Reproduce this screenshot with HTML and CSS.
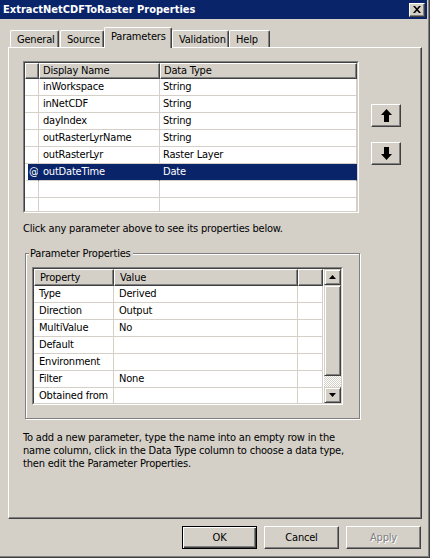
FILE: index.html
```html
<!DOCTYPE html>
<html>
<head>
<meta charset="utf-8">
<title>ExtractNetCDFToRaster Properties</title>
<link rel="stylesheet" href="styles.css">
</head>
<body>
<div class="window">
	<div class="titlebar">
		<span class="title">ExtractNetCDFToRaster Properties</span>
		<div class="close-btn">
			<svg width="8" height="7" viewBox="0 0 8 7"><path d="M0 0h2l2 2.3 2-2.3h2l-3 3.5 3 3.5h-2l-2-2.3-2 2.3h-2l3-3.5z" fill="#000"/></svg>
		</div>
	</div>

	<div class="client">
		<div class="tabs">
			<div class="tab tab-general">General</div>
			<div class="tab tab-source">Source</div>
			<div class="tab tab-params active">Parameters</div>
			<div class="tab tab-valid">Validation</div>
			<div class="tab tab-help">Help</div>
		</div>

		<div class="panel">
			<div class="param-area">
				<div class="grid param-grid">
					<div class="grid-inner">
						<div class="row head">
							<div class="cell hdr"></div>
							<div class="cell hdr">Display Name</div>
							<div class="cell hdr">Data Type</div>
						</div>
						<div class="row">
							<div class="cell rh"></div>
							<div class="cell">inWorkspace</div>
							<div class="cell">String</div>
						</div>
						<div class="row">
							<div class="cell rh"></div>
							<div class="cell">inNetCDF</div>
							<div class="cell">String</div>
						</div>
						<div class="row">
							<div class="cell rh"></div>
							<div class="cell">dayIndex</div>
							<div class="cell">String</div>
						</div>
						<div class="row">
							<div class="cell rh"></div>
							<div class="cell">outRasterLyrName</div>
							<div class="cell">String</div>
						</div>
						<div class="row">
							<div class="cell rh"></div>
							<div class="cell">outRasterLyr</div>
							<div class="cell">Raster Layer</div>
						</div>
						<div class="row selected">
							<div class="cell rh"><span class="rh-mark">@</span></div>
							<div class="cell">outDateTime</div>
							<div class="cell">Date</div>
						</div>
						<div class="row">
							<div class="cell rh"></div>
							<div class="cell"></div>
							<div class="cell"></div>
						</div>
						<div class="row">
							<div class="cell rh"></div>
							<div class="cell"></div>
							<div class="cell"></div>
						</div>
					</div>
				</div>

				<div class="move-btns">
					<div class="move-btn">
						<svg width="11" height="13" viewBox="0 0 11 13"><path d="M5.5 0L11 6H8V13H3V6H0Z" fill="#000"/></svg>
					</div>
					<div class="move-btn">
						<svg width="11" height="13" viewBox="0 0 11 13"><path d="M5.5 13L11 7H8V0H3V7H0Z" fill="#000"/></svg>
					</div>
				</div>
			</div>

			<p class="hint">Click any parameter above to see its properties below.</p>

			<div class="group">
				<div class="group-label">Parameter Properties</div>
				<div class="grid prop-grid">
					<div class="grid-inner prop-inner">
						<div class="prop-table">
							<div class="prow head">
								<div class="cell hdr">Property</div>
								<div class="cell hdr">Value</div>
								<div class="cell hdr"></div>
								<div class="cell gap"></div>
							</div>
							<div class="prow">
								<div class="cell">Type</div>
								<div class="cell">Derived</div>
								<div class="cell"></div>
								<div class="cell gap"></div>
							</div>
							<div class="prow">
								<div class="cell">Direction</div>
								<div class="cell">Output</div>
								<div class="cell"></div>
								<div class="cell gap"></div>
							</div>
							<div class="prow">
								<div class="cell">MultiValue</div>
								<div class="cell">No</div>
								<div class="cell"></div>
								<div class="cell gap"></div>
							</div>
							<div class="prow">
								<div class="cell">Default</div>
								<div class="cell"></div>
								<div class="cell"></div>
								<div class="cell gap"></div>
							</div>
							<div class="prow">
								<div class="cell">Environment</div>
								<div class="cell"></div>
								<div class="cell"></div>
								<div class="cell gap"></div>
							</div>
							<div class="prow">
								<div class="cell">Filter</div>
								<div class="cell">None</div>
								<div class="cell"></div>
								<div class="cell gap"></div>
							</div>
							<div class="prow">
								<div class="cell">Obtained from</div>
								<div class="cell"></div>
								<div class="cell"></div>
								<div class="cell gap"></div>
							</div>
						</div>
						<div class="scrollbar">
							<div class="sb-btn">
								<svg width="7" height="4" viewBox="0 0 7 4"><path d="M3.5 0L7 4H0Z" fill="#000"/></svg>
							</div>
							<div class="sb-thumb"></div>
							<div class="sb-track"></div>
							<div class="sb-btn">
								<svg width="7" height="4" viewBox="0 0 7 4"><path d="M0 0H7L3.5 4Z" fill="#000"/></svg>
							</div>
						</div>
					</div>
				</div>
			</div>

			<p class="help">To add a new parameter, type the name into an empty row in the<br>name column, click in the Data Type column to choose a data type,<br>then edit the Parameter Properties.</p>
		</div>

		<div class="buttons">
			<button class="btn default">OK</button>
			<button class="btn">Cancel</button>
			<button class="btn disabled">Apply</button>
		</div>
	</div>
</div>
</body>
</html>
```

FILE: styles.css
```css
* {
	box-sizing: border-box;
	margin: 0;
	padding: 0;
}

body {
	font-family: "DejaVu Sans Condensed", "Liberation Sans", sans-serif;
	font-size: 11px;
	line-height: 13px;
	letter-spacing: -0.2px;
	color: #000;
	background: #d4d0c8;
}

.window {
	width: 430px;
	height: 558px;
	background: #d4d0c8;
	border-right: 1px solid #404040;
	border-bottom: 1px solid #404040;
	box-shadow: inset -1px -1px #808080;
	padding: 0 2px 2px 0;
}

/* title bar */
.titlebar {
	height: 19px;
	background: #0a246a;
	display: flex;
	align-items: center;
	justify-content: space-between;
	padding: 0 2px 0 3px;
}

.title {
	color: #fff;
	font-weight: bold;
	letter-spacing: 0;
}

.close-btn {
	width: 16px;
	height: 14px;
	background: #d4d0c8;
	border: 1px solid;
	border-color: #fff #404040 #404040 #fff;
	box-shadow: inset -1px -1px #808080;
	display: flex;
	align-items: center;
	justify-content: center;
}

.client {
	padding: 0 5px 0 8px;
}

/* tabs */
.tabs {
	display: flex;
	align-items: flex-end;
	height: 28px;
	padding-left: 2px;
}

.tab {
	height: 17px;
	border-left: 1px solid #fff;
	border-top: 1px solid #fff;
	border-right: 1px solid #404040;
	box-shadow: inset -1px 0 #808080;
	border-radius: 2px 2px 0 0;
	padding: 2px 0 0 6px;
	white-space: nowrap;
}

.tab-general { width: 49px; margin-right: 1px; }
.tab-source { width: 44px; }
.tab-params { width: 68px; }
.tab-valid { width: 57px; }
.tab-help { width: 41px; }

.tab.active {
	height: 21px;
	margin-bottom: -1px;
	padding-top: 2px;
	background: #d4d0c8;
	position: relative;
	z-index: 1;
}

/* panel */
.panel {
	height: 472px;
	border-left: 1px solid #fff;
	border-top: 1px solid #fff;
	border-right: 1px solid #404040;
	border-bottom: 1px solid #404040;
	box-shadow: inset -1px -1px #808080;
	padding: 13px 0 0 14px;
}

.param-area {
	display: flex;
}

.grid {
	background: #fff;
	border: 1px solid;
	border-color: #808080 #fff #fff #808080;
}

.grid-inner {
	height: 100%;
	border: 1px solid;
	border-color: #404040 #d4d0c8 #d4d0c8 #404040;
	overflow: hidden;
}

.param-grid {
	width: 336px;
	height: 152px;
}

.row {
	display: grid;
	grid-template-columns: 14px 121px 1fr;
	height: 17px;
}

.cell {
	border-right: 1px solid #d4d0c8;
	border-bottom: 1px solid #d4d0c8;
	padding-left: 4px;
	line-height: 16px;
	white-space: nowrap;
	overflow: hidden;
}

.row .cell:nth-child(3) {
	padding-left: 3px;
}

.cell.hdr {
	background: #d4d0c8;
	border-top: 1px solid #fff;
	border-left: 1px solid #fff;
	border-right: 1px solid #404040;
	border-bottom: 1px solid #404040;
	box-shadow: inset -1px -1px #808080;
	line-height: 14px;
	padding-left: 3px;
}

.row.head {
	height: 16px;
}

.cell.rh {
	padding: 0;
}

.row.selected .cell {
	background: #0a246a;
	color: #fff;
	border-right-color: #0a246a;
}

.row.selected .cell.rh {
	border-left: 3px solid #fff;
}

.rh-mark {
	display: block;
	padding-left: 1px;
	color: #fff;
}

.move-btns {
	display: flex;
	flex-direction: column;
	gap: 15px;
	margin: 43px 0 0 12px;
}

.move-btn {
	width: 30px;
	height: 23px;
	border: 1px solid;
	border-color: #fff #404040 #404040 #fff;
	box-shadow: inset -1px -1px #808080;
	display: flex;
	align-items: center;
	justify-content: center;
}

.hint {
	margin-top: 9px;
}

/* group box */
.group {
	width: 335px;
	margin: 18px 0 0 2px;
	border: 1px solid #808080;
	box-shadow: inset 1px 1px #fff, 1px 1px #fff;
	padding: 0 0 13px 6px;
}

.group-label {
	width: max-content;
	margin: -7px 0 0 -3px;
	padding: 0 2px 0 1px;
	background: #d4d0c8;
}

.prop-grid {
	width: 311px;
	height: 138px;
	margin-top: 7px;
}

.prop-inner {
	display: flex;
}

.prop-table {
	width: 290px;
}

.prow {
	display: grid;
	grid-template-columns: 80px 184px 25px 1fr;
	height: 17px;
}

.prow .cell:nth-child(2) {
	padding-left: 5px;
}

.prow .cell:first-child {
	padding-left: 5px;
}

.prow.head .cell.hdr {
	line-height: 15px;
}

.prow .cell.gap {
	border: 0;
	background: #fff;
	box-shadow: none;
}

.scrollbar {
	width: 17px;
	display: flex;
	flex-direction: column;
}

.sb-btn,
.sb-thumb {
	background: #d4d0c8;
	border: 1px solid;
	border-color: #d4d0c8 #404040 #404040 #d4d0c8;
	box-shadow: inset 1px 1px #fff, inset -1px -1px #808080;
}

.sb-btn {
	height: 16px;
	flex: none;
	display: flex;
	align-items: center;
	justify-content: center;
}

.sb-thumb {
	height: 91px;
	flex: none;
}

.sb-track {
	flex: 1;
	background: repeating-conic-gradient(#fff 0 25%, #d4d0c8 0 50%) 0 0 / 2px 2px;
}

.help {
	margin-top: 12px;
}

/* dialog buttons */
.buttons {
	display: flex;
	justify-content: flex-end;
	gap: 7px;
	margin: 7px 1px 0 0;
}

.btn {
	width: 75px;
	height: 23px;
	font-family: inherit;
	font-size: 11px;
	letter-spacing: inherit;
	background: #d4d0c8;
	border: 1px solid;
	border-color: #fff #404040 #404040 #fff;
	box-shadow: inset -1px -1px #808080;
}

.btn.default {
	border-color: #000;
	box-shadow: inset 1px 1px #fff, inset -1px -1px #404040, inset -2px -2px #808080;
}

.btn.disabled {
	color: #808080;
	text-shadow: 1px 1px #fff;
}
```
